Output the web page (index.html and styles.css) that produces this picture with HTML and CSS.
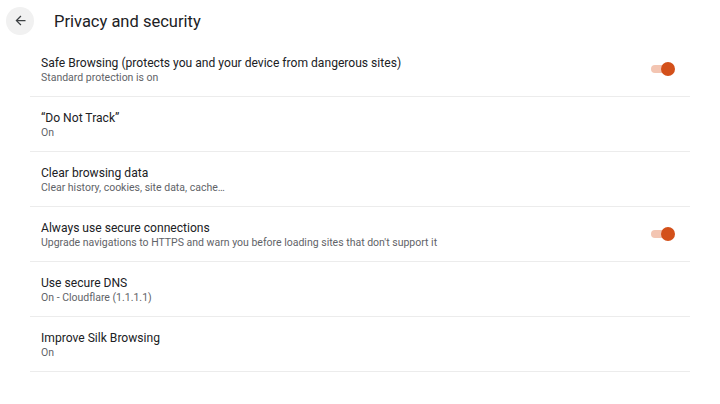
FILE: index.html
```html
<!DOCTYPE html>
<html>
<head>
<meta charset="utf-8">
<link rel="stylesheet" href="styles.css">
</head>
<body>
<div class="header">
  <div class="back">
    <svg width="15" height="15" viewBox="0 0 24 24"><path d="M20 11H7.83l5.59-5.59L12 4l-8 8 8 8 1.41-1.41L7.83 13H20v-2z" fill="#3c4043"/></svg>
  </div>
  <div class="title">Privacy and security</div>
</div>
<div class="list">
  <div class="row">
    <div class="text">
      <div class="label">Safe Browsing (protects you and your device from dangerous sites)</div>
      <div class="sub">Standard protection is on</div>
    </div>
    <div class="toggle"><div class="track"></div><div class="knob"></div></div>
  </div>
  <div class="row">
    <div class="text">
      <div class="label">“Do Not Track”</div>
      <div class="sub">On</div>
    </div>
  </div>
  <div class="row">
    <div class="text">
      <div class="label">Clear browsing data</div>
      <div class="sub">Clear history, cookies, site data, cache…</div>
    </div>
  </div>
  <div class="row">
    <div class="text">
      <div class="label">Always use secure connections</div>
      <div class="sub">Upgrade navigations to HTTPS and warn you before loading sites that don't support it</div>
    </div>
    <div class="toggle"><div class="track"></div><div class="knob"></div></div>
  </div>
  <div class="row">
    <div class="text">
      <div class="label">Use secure DNS</div>
      <div class="sub">On - Cloudflare (1.1.1.1)</div>
    </div>
  </div>
  <div class="row">
    <div class="text">
      <div class="label">Improve Silk Browsing</div>
      <div class="sub">On</div>
    </div>
  </div>
</div>
</body>
</html>
```
FILE: styles.css
```css
html, body {
  margin: 0;
  padding: 0;
  background: #ffffff;
  font-family: Roboto, "Liberation Sans", sans-serif;
}
.header {
  height: 42px;
  display: flex;
  align-items: center;
  padding-left: 6px;
}
.back {
  width: 28px;
  height: 28px;
  border-radius: 50%;
  background: #f1f1f1;
  display: flex;
  align-items: center;
  justify-content: center;
  margin-top: -1px;
}
.title {
  margin-left: 20px;
  font-size: 16.5px;
  color: #202124;
  margin-top: 0;
}
.list {
  margin-left: 30px;
  width: 660px;
}
.row {
  height: 54px;
  border-bottom: 1px solid #ececec;
  display: flex;
  align-items: center;
  padding-left: 11px;
}
.text {
  flex: 1;
  padding-top: 2px;
}
.label {
  font-size: 12.1px;
  color: #202124;
  line-height: 15px;
}
.sub {
  font-size: 10.5px;
  color: #5f6368;
  line-height: 14px;
}
.toggle {
  position: relative;
  width: 28px;
  height: 16px;
  margin-right: 13px;
}
.track {
  position: absolute;
  left: 2px;
  top: 4px;
  width: 22px;
  height: 8px;
  border-radius: 4px;
  background: #f3c5b2;
}
.knob {
  position: absolute;
  left: 12px;
  top: 1px;
  width: 14px;
  height: 14px;
  border-radius: 50%;
  background: #d3501a;
}
```
